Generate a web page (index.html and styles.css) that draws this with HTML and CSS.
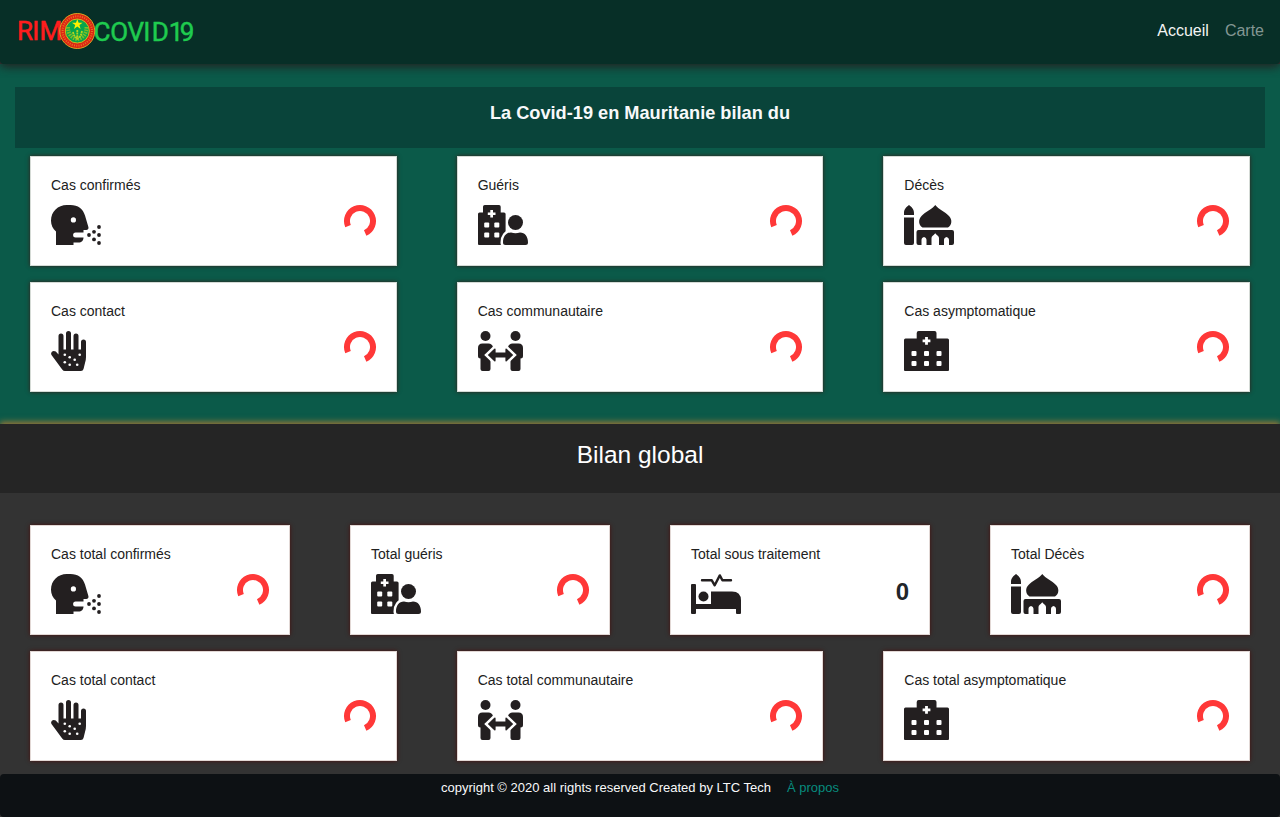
FILE: index.html
```html
<!DOCTYPE html>
<html lang="fr">
<head>
<meta charset="utf-8">
<title>RIM COVID19</title>
<link rel="stylesheet" href="styles.css">
</head>
<body>
<svg class="sprite" aria-hidden="true">
  <symbol id="cough" viewBox="0 0 50 40">
    <path fill-rule="evenodd" d="M5 40V26.4C1.800 23.500 0 20 0 15.700C0 6.500 7 0 15.700 0H19.500C27 0 32 4 34 10.500L37.300 21.800C38 23.800 37 25 35.200 25H32.500V27.400H24.600A2.500 2.500 0 0 0 24.600 32.400H32.500C32.500 35.500 30.500 37.500 27.500 37.500H22.500V40ZM22.400 12.300a2.600 2.600 0 1 0 0 5.200a2.600 2.600 0 0 0 0-5.200Z"/>
    <circle cx="38" cy="30" r="1.900"/><circle cx="43" cy="26.800" r="1.900"/><circle cx="48" cy="22" r="1.900"/><circle cx="48" cy="30" r="1.900"/><circle cx="43" cy="34.400" r="1.900"/><circle cx="48" cy="38" r="1.900"/>
  </symbol>
  <symbol id="recovered" viewBox="0 0 50 40">
    <path d="M0 39V9q0-1.500 1.500-1.500H5V1.800Q5 0 6.800 0H21Q22.700 0 22.700 1.800V7.500H26q1.600 0 1.600 1.500V40H1q-1 0-1-1Z"/>
    <path class="hole" d="M12.300 5h2.700v2.400h2.500v2.700h-2.500v2.500h-2.700v-2.500H9.800V7.400h2.500Z"/>
    <g class="hole"><rect x="6.200" y="17.500" width="5" height="5" rx="1"/><rect x="16.300" y="17.500" width="5" height="5" rx="1"/><rect x="6.200" y="27.500" width="5" height="5" rx="1"/><rect x="16.300" y="27.500" width="5" height="5" rx="1"/></g>
    <path class="cut" d="M25 37.500C25 31.500 28 27.500 33 27.500q4.500 1.500 9 0C47 27.500 50 31.500 50 37.500Q50 40 47.500 40H27.500Q25 40 25 37.500Z"/>
    <circle cx="37.500" cy="17.500" r="7.500"/>
  </symbol>
  <symbol id="mosque" viewBox="0 0 50 40">
    <path d="M0 10V8C0 4 2.500 2 5 0C7.500 2 10 4 10 8V10ZM0 12.500H10V38q0 2-2 2H2q-2 0-2-2ZM18.500 22.500C14.500 20 14 14.500 17.500 11C21.500 6.500 28 4.500 31.300 0C34.500 4.500 41 6.500 45 11C48.500 14.500 48 20 44 22.500ZM14.500 25H48q2 0 2 2V38q0 2-2 2H45V35c0-1.500-1-2.700-2.500-3c-1.500.300-2.500 1.500-2.500 3v5H35V33c0-2-2-2.500-3.750-4.800C29.500 30.500 27.500 31 27.500 33v7H22.500V35c0-1.500-1-2.700-2.500-3c-1.500.300-2.500 1.500-2.500 3v5H14.500q-2 0-2-2V27q0-2 2-2Z"/>
  </symbol>
  <symbol id="hand" viewBox="0 0 35 40">
    <path d="M14 40Q12.300 40 11.200 38.500L.500 24C-1 21.500 2 18.500 4.800 20.600L7.500 23.500V5a2.500 2.500 0 0 1 5 0V18.500H15V2.500a2.500 2.500 0 0 1 5 0V18.500H22.500V5a2.500 2.500 0 0 1 5 0V18.500H30V11a2.500 2.500 0 0 1 5 0V26Q35 29 34 32L32.500 38Q32 40 30 40Z"/>
    <g class="hole"><circle cx="13.800" cy="23.800" r="1.300"/><circle cx="28.700" cy="23.800" r="1.300"/><circle cx="18.700" cy="26.300" r="1.300"/><circle cx="23.700" cy="28.800" r="1.300"/><circle cx="13.800" cy="31.300" r="1.300"/><circle cx="18.700" cy="33.800" r="1.300"/><circle cx="26.200" cy="33.800" r="1.300"/></g>
  </symbol>
  <symbol id="community" viewBox="0 0 45 40">
    <circle cx="7.500" cy="5" r="5"/><circle cx="37.500" cy="5" r="5"/>
    <path d="M0 17Q0 12.500 4.500 12.500H10.500Q14 12.500 15 16L12.500 27V38q0 2-2 2h-6q-2 0-2-2V27.500Q0 27.500 0 25ZM45 17Q45 12.500 40.500 12.500H34.500Q31 12.500 30 16L32.500 27V38q0 2 2 2h6q2 0 2-2V27.500Q45 27.500 45 25Z"/>
    <path class="cut" d="M9.800 24L16.300 17.700Q17.600 17 17.600 18.500V21.500H27.400V18.500Q27.400 17 28.700 17.700L35.200 24L28.700 30.300Q27.400 31 27.400 29.500V26.500H17.600V29.500Q17.600 31 16.300 30.300Z"/>
  </symbol>
  <symbol id="hospital" viewBox="0 0 45 40">
    <path d="M0 39V9q0-1.500 1.500-1.500H12.700V2q0-2 2-2H30.500q2 0 2 2V7.500H43.500Q45 7.500 45 9V39q0 1-1 1H1q-1 0-1-1Z"/>
    <path class="hole" d="M21.100 6h2.800v2.500h2.500v2.800h-2.500v2.500h-2.800v-2.500h-2.500V8.500h2.500Z"/>
    <g class="hole"><rect x="7.500" y="20" width="5" height="5" rx="1"/><rect x="20" y="20" width="5" height="5" rx="1"/><rect x="32.500" y="20" width="5" height="5" rx="1"/><rect x="7.500" y="30" width="5" height="5" rx="1"/><rect x="20" y="30" width="5" height="5" rx="1"/><rect x="32.500" y="30" width="5" height="5" rx="1"/></g>
  </symbol>
  <symbol id="bed" viewBox="0 0 50 40">
    <path d="M1 10H4q1 0 1 1V30H20V17.500H41Q50 17.500 50 26.500V39q0 1-1 1H46q-1 0-1-1V35H5V39q0 1-1 1H1q-1 0-1-1V11q0-1 1-1Z"/>
    <circle cx="12.500" cy="22.500" r="5"/>
    <path class="pulse" d="M11 6.300H20.800L23.700 11.300L28.800 1.400L31.400 6.300H40"/>
  </symbol>
  <symbol id="loader" viewBox="0 0 34 34">
    <path d="M5.030 22.080A13 13 0 1 1 22.180 28.920"/>
  </symbol>
</svg>

<nav class="navbar">
  <svg class="logo" viewBox="0 0 184 44" role="img" aria-label="RIM COVID19">
    <text class="rim" x="1 16.200 23.500" y="31">RIM</text>
    <text class="covid" x="77.500 94.200 111.500 127.200 135.800 152.800 163.700" y="32">COVID19</text>
    <circle cx="61.300" cy="22" r="17.500" class="seal-ring"/>
    <circle cx="61.300" cy="22" r="14.700" class="seal-lettering"/>
    <circle cx="61.300" cy="22" r="12" class="seal-center"/>
    <path class="seal-star" d="M61.300 10l1.300 3.700h4l-3.200 2.400 1.200 3.900-3.300-2.400-3.300 2.400 1.200-3.900-3.200-2.400h4Z"/>
    <path class="seal-wreath" d="M52 18q0 10 9 12M70.500 18q0 10-9 12"/>
    <path class="seal-palm" d="M61.300 21v10M57 23q1 5 4 6M66 22q-1 6-4 7"/>
  </svg>
  <div class="links"><a class="active">Accueil</a><a>Carte</a></div>
</nav>

<main>
  <section class="today">
    <h1>La Covid-19 en Mauritanie bilan du</h1>
    <div class="cards">
      <article class="card"><h2>Cas confirmés</h2><div class="row"><svg class="icon wide"><use href="#cough"/></svg><svg class="spin"><use href="#loader"/></svg></div></article>
      <article class="card"><h2>Guéris</h2><div class="row"><svg class="icon wide"><use href="#recovered"/></svg><svg class="spin"><use href="#loader"/></svg></div></article>
      <article class="card"><h2>Décès</h2><div class="row"><svg class="icon wide"><use href="#mosque"/></svg><svg class="spin"><use href="#loader"/></svg></div></article>
      <article class="card"><h2>Cas contact</h2><div class="row"><svg class="icon narrow"><use href="#hand"/></svg><svg class="spin"><use href="#loader"/></svg></div></article>
      <article class="card"><h2>Cas communautaire</h2><div class="row"><svg class="icon"><use href="#community"/></svg><svg class="spin"><use href="#loader"/></svg></div></article>
      <article class="card"><h2>Cas asymptomatique</h2><div class="row"><svg class="icon"><use href="#hospital"/></svg><svg class="spin"><use href="#loader"/></svg></div></article>
    </div>
  </section>

  <section class="global">
    <h1>Bilan global</h1>
    <div class="cards four">
      <article class="card"><h2>Cas total confirmés</h2><div class="row"><svg class="icon wide"><use href="#cough"/></svg><svg class="spin"><use href="#loader"/></svg></div></article>
      <article class="card"><h2>Total guéris</h2><div class="row"><svg class="icon wide"><use href="#recovered"/></svg><svg class="spin"><use href="#loader"/></svg></div></article>
      <article class="card"><h2>Total sous traitement</h2><div class="row"><svg class="icon wide"><use href="#bed"/></svg><strong>0</strong></div></article>
      <article class="card"><h2>Total Décès</h2><div class="row"><svg class="icon wide"><use href="#mosque"/></svg><svg class="spin"><use href="#loader"/></svg></div></article>
    </div>
    <div class="cards">
      <article class="card"><h2>Cas total contact</h2><div class="row"><svg class="icon narrow"><use href="#hand"/></svg><svg class="spin"><use href="#loader"/></svg></div></article>
      <article class="card"><h2>Cas total communautaire</h2><div class="row"><svg class="icon"><use href="#community"/></svg><svg class="spin"><use href="#loader"/></svg></div></article>
      <article class="card"><h2>Cas total asymptomatique</h2><div class="row"><svg class="icon"><use href="#hospital"/></svg><svg class="spin"><use href="#loader"/></svg></div></article>
    </div>
  </section>
</main>

<footer><span>copyright © 2020 all rights reserved Created by LTC Tech</span><a>À propos</a></footer>
</body>
</html>
```

FILE: styles.css
```css
* { box-sizing: border-box; }
body {
  margin: 0;
  height: 817px;
  display: flex;
  flex-direction: column;
  overflow: hidden;
  background: #333;
  color: #212529;
  font-family: "Liberation Sans", Arial, sans-serif;
}
h1, h2 { margin: 0; font-weight: 400; }
.sprite { display: none; }

.navbar {
  position: relative;
  z-index: 1;
  flex: none;
  height: 64px;
  padding: 0 16px;
  display: flex;
  align-items: center;
  justify-content: space-between;
  background: #072f27;
  border-radius: 0 0 4px 4px;
  box-shadow: 0 3px 10px #222;
}
.logo { width: 184px; height: 44px; margin-top: -2px; }
.logo text { font-family: Roboto, sans-serif; font-size: 26px; stroke-width: .5px; }
.rim { fill: #ff1d1d; stroke: #ff1d1d; }
.covid { fill: #1fcb4f; stroke: #1fcb4f; }
.seal-ring { fill: #dd2415; stroke: #d8a522; stroke-width: 1; }
.seal-lettering { fill: none; stroke: #e8741f; stroke-width: 2; stroke-dasharray: 1 1.3; }
.seal-center { fill: #08a64b; stroke: #d8b51b; stroke-width: 1; }
.seal-star { fill: #fff000; }
.seal-wreath { fill: none; stroke: #7dbd28; stroke-width: 4; stroke-dasharray: 1.5 1; }
.seal-palm { fill: none; stroke: #b4d31e; stroke-width: 1.8; stroke-dasharray: 2 .6; }
.links { display: flex; gap: 16px; font-size: 16px; margin-top: -3px; }
.links a { color: #839793; }
.links .active { color: #f3f5f4; }

.today {
  height: 360px;
  padding-top: 23px;
  background: #0b5a49;
}
.today h1 {
  height: 61px;
  margin: 0 15px 8px;
  padding-top: 15px;
  background: #09443a;
  color: #f8f9fa;
  font-size: 18.200px;
  line-height: 22px;
  font-weight: 700;
  text-align: center;
}
.cards {
  display: grid;
  grid-template-columns: repeat(3, 1fr);
  gap: 16px 60px;
  padding: 0 30px;
}
.cards.four { grid-template-columns: repeat(4, 1fr); margin-bottom: 16px; }
.card {
  height: 110px;
  padding: 20px;
  background: #fff;
  border: 1px solid #d5dbd6;
  box-shadow: 0 0 4px #371d19;
}
.global .card { border-color: #e2d8d5; box-shadow: 0 0 4px #4a100d; }
.card h2 { font-size: 14px; line-height: 17px; margin-bottom: 11px; color: #212121; }
.row { display: flex; justify-content: space-between; }
.icon { width: 45px; height: 40px; fill: #231f20; }
.icon.wide { width: 50px; }
.icon.narrow { width: 35px; }
.hole { fill: #fff; }
.cut { stroke: #fff; stroke-width: 5px; paint-order: stroke; }
.pulse { fill: none; stroke: #231f20; stroke-width: 2.400px; stroke-linecap: round; stroke-linejoin: round; }
.spin {
  width: 34px;
  height: 34px;
  margin: -1px -1px 0 0;
  fill: none;
  stroke: #ff3838;
  stroke-width: 6px;
}
.row strong { font-size: 24px; line-height: 36px; }

.global { background: #333; }
.global h1 {
  height: 69px;
  padding-top: 16px;
  margin-bottom: 32px;
  background: #252525;
  box-shadow: 0 -2px 6px #a27636;
  clip-path: inset(-12px 0 0 0);
  color: #fff;
  font-size: 24.500px;
  line-height: 29px;
  text-align: center;
}
footer {
  flex: 1;
  margin-top: 13px;
  padding-top: 6px;
  display: flex;
  justify-content: center;
  align-items: flex-start;
  gap: 16px;
  background: #0d1114;
  border-radius: 4px;
  color: #f8f9fa;
  font-size: 13px;
  line-height: 16px;
}
footer a { color: #078c7e; }
```
